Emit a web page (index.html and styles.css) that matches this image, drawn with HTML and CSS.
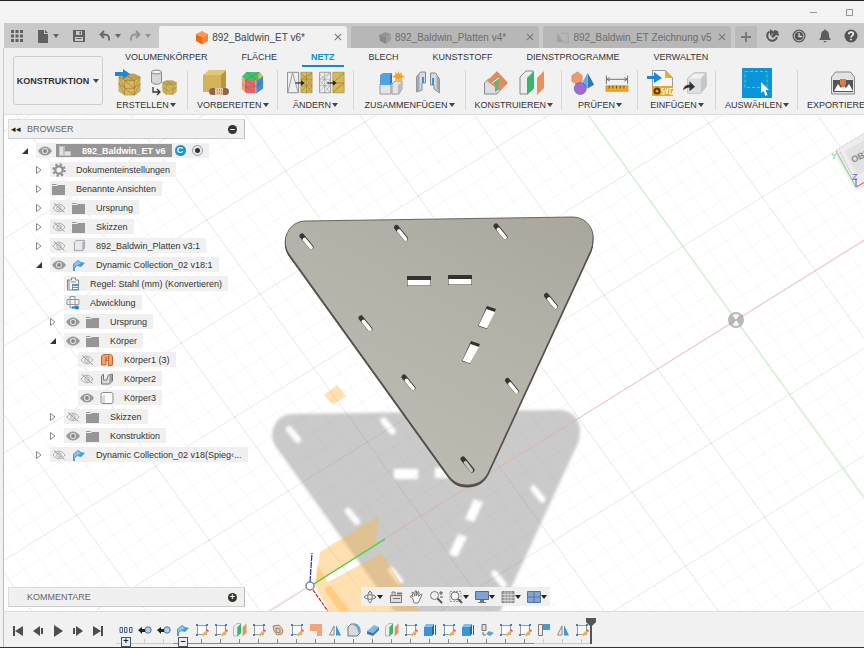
FILE: index.html
```html
<!DOCTYPE html>
<html lang="de">
<head>
<meta charset="utf-8">
<meta name="viewport" content="width=device-width, initial-scale=1">
<title>892_Baldwin_ET v6*</title>
<link rel="stylesheet" href="styles.css">
</head>
<body>
<svg class="sprite" aria-hidden="true">
  <symbol id="apps" viewBox="0 0 12 12"><path fill="#606060" d="M0 0h3v3H0zM4.500 0h3v3h-3zM9 0h3v3H9zM0 4.500h3v3H0zM4.500 4.500h3v3h-3zM9 4.500h3v3H9zM0 9h3v3H0zM4.500 9h3v3h-3zM9 9h3v3H9z"/></symbol>
  <symbol id="file" viewBox="0 0 12 14"><path fill="#606060" d="M1 1h6v4h4v9H1zM8 1l3 3H8z"/></symbol>
  <symbol id="save" viewBox="0 0 12 12"><path fill="#606060" fill-rule="evenodd" d="M0 0h12v12H1l-1-1zM3 1v4h6V1zM2 7v4h8V7zM6.500 1.500h1.500v3H6.500zM3.500 8h5v1h-5z"/></symbol>
  <symbol id="undo" viewBox="0 0 12 12"><path fill="none" stroke="#666" stroke-width="1.800" d="M5 1L1.500 4.500 5 8M2 4.500h4c3 0 4.500 2 4 6"/></symbol>
  <symbol id="cube" viewBox="0 0 12 14"><path fill="#ff9a52" d="M6 0l6 3-6 3-6-3z"/><path fill="#ef6a16" d="M0 3l6 3v7.500L0 10z"/><path fill="#fb8238" d="M12 3L6 6v7.500l6-3.500z"/></symbol>
  <symbol id="graycube" viewBox="0 0 12 14"><path fill="#949494" d="M6 1l6 2-5 3-7-2z"/><path fill="#888" d="M0 4l7 2v7l-6-3z"/><path fill="#9d9d9d" d="M12 3L7 6v7l5-4z"/></symbol>
  <symbol id="sheet" viewBox="0 0 14 12"><path fill="#a2a2a2" d="M0 0l8 11H0z"/><path fill="none" stroke="#a2a2a2" d="M5 .5h8v11H8"/></symbol>
  <symbol id="x" viewBox="0 0 8 8"><path fill="none" stroke="#777" stroke-width="1.100" d="M.8.8l6.400 6.400M7.200.8L.8 7.200"/></symbol>
  <symbol id="plus" viewBox="0 0 10 10"><path fill="none" stroke="#777" stroke-width="1.800" d="M5 0v10M0 5h10"/></symbol>
  <symbol id="ext" viewBox="0 0 14 14"><path fill="none" stroke="#555" stroke-width="2" d="M4.500 2.500A5 5 0 1 0 12 8"/><path fill="#555" d="M5 0l4 3-4 4zM9 1l4 1 1 5-3-1-3 3-2-2 2-2z"/></symbol>
  <symbol id="clock" viewBox="0 0 14 14"><circle cx="7" cy="7" r="6.500" fill="#555"/><circle cx="7" cy="7" r="4.800" fill="none" stroke="#c9c9c9"/><path fill="none" stroke="#ddd" stroke-width="1.300" d="M7 4v3.500h3"/></symbol>
  <symbol id="bell" viewBox="0 0 12 14"><path fill="#5c5c5c" d="M6 0l1 1.500c2.500.5 3 2.500 3 5 0 2 1 3 2 4.500H0c1-1.500 2-2.500 2-4.500 0-2.500.5-4.500 3-5zM4 12h4l-2 1.500z"/></symbol>
  <symbol id="help" viewBox="0 0 14 14"><circle cx="7" cy="7" r="6.500" fill="#555"/><path fill="none" stroke="#eee" stroke-width="1.700" d="M4.800 5.300c0-3 4.500-2.800 4.500-.2C9.300 6.800 7 6.500 7 8.500M7 9.700v1.600"/></symbol>

  <symbol id="mesh" viewBox="0 0 24 24"><path fill="#d9b95f" stroke="#a98c3c" stroke-width=".6" d="M1 4l6-3h10l6 3v15l-6 4H7l-6-4z"/><path fill="#c3a24b" d="M1 4l6-3h10l6 3-6 4H7z"/><path fill="none" stroke="#9a803b" stroke-width=".7" d="M1 4l6 4h10l6-4M7 8v15M17 8v15M1 11l6 5h10l6-5M7 8l10 8M7 16l10 7M1 4l6 12M23 4l-6 12M7 1l10 7M1 11l6 12M23 11l-6 12"/></symbol>
  <symbol id="meshin" viewBox="0 0 28 28"><use href="#mesh" x="3" y="4" width="23" height="23"/><path fill="#1c86d8" d="M0 3h8V0l7 5-7 5V7H0z"/></symbol>
  <symbol id="meshconv" viewBox="0 0 28 28"><path fill="#d5d7da" stroke="#888" d="M2.500 3v10c2 3 8 3 10 0V3"/><ellipse cx="7.500" cy="3" rx="5" ry="2" fill="#eee" stroke="#888"/><use href="#mesh" x="13" y="11" width="15" height="15"/><path fill="none" stroke="#333" stroke-width="1.300" d="M4 18v5h6M8 20l3 3-3 3"/></symbol>
  <symbol id="repair" viewBox="0 0 28 28"><path fill="#e3c874" d="M1 6l6-5h17l-5 5z"/><path fill="#d4b45a" d="M1 6h18v17H1z"/><path fill="#b9963e" d="M19 6l5-5v17l-5 5z"/><rect x="7" y="19" width="20" height="7" rx="3.500" fill="#8c6649"/><path fill="#e3c9a3" d="M13 19h8v7h-8z"/><path stroke="#8c6649" stroke-dasharray="1 1" d="M15 21h5M15 24h5"/></symbol>
  <symbol id="facegroup" viewBox="0 0 26 26"><path fill="#ed6467" d="M3 9h14v15H7l-4-4z"/><path fill="#3fc46b" d="M2 6l5-5h14l4 5-7 4H6z"/><path fill="#3d8dd8" d="M18 10l7-4v13l-7 5z"/><path fill="#f3a16b" d="M2 7l4 3v13l-4-4z"/><path fill="#e4bb46" d="M20 1l5 5-5 3z"/><path fill="none" stroke="#666" stroke-width=".5" d="M6 10v13M18 10v14M2 14l4 3h12l7-5M6 10l12 7M6 17l12 7M7 1l11 9M21 1L6 10M25 6l-7 11"/></symbol>
  <symbol id="remesh" viewBox="0 0 28 26"><path fill="#eee" stroke="#888" d="M.5 1.500h12v22H.5z"/><path fill="none" stroke="#999" d="M1 23L6 2l6 21"/><path fill="#d6b958" stroke="#a0863d" stroke-width=".7" d="M15 1.500h12v22H15z"/><path fill="none" stroke="#a0863d" stroke-width=".7" d="M15 9h12M15 16h12M21 2v22M15 9l12-7M15 16l12-14M15 23L27 9M21 23l6-7M15 2l12 14M15 9l12 14"/><path stroke="#222" stroke-width="1.300" fill="none" d="M9 13h8"/><path fill="#222" d="M15 10l4 3-4 3z"/></symbol>
  <symbol id="reduce" viewBox="0 0 28 26"><path fill="#eee" stroke="#999" d="M.5 1.500h12v22H.5z"/><path fill="none" stroke="#999" stroke-width=".6" d="M0 9h12M0 16h12M6 2v22M0 9l12-7M0 16L12 2M0 23L12 9M6 23l6-7M0 2l12 14M0 9l12 14"/><path fill="#d6b958" stroke="#b89a48" d="M15 1.500h12v22H15z"/><path fill="none" stroke="#a0863d" d="M15 13h12M15 13L27 2M15 23l12-10"/><path stroke="#222" stroke-width="1.300" d="M9 13h8"/><path fill="#222" d="M15 10l4 3-4 3z"/></symbol>
  <symbol id="newcomp" viewBox="0 0 26 26"><path fill="#e2e4e6" stroke="#999" d="M1 14h11v10H1zM13 14l3-3h7v8l-3 5h-7z"/><path fill="#b9bcc0" d="M19 15l4-3v8l-4 4z"/><path fill="#4fa2e4" d="M1 5l3-2h9v10l-2 2H1z"/><path fill="#2b79bd" d="M11 6l2-3v10l-2 2z"/><path fill="#f5a51b" d="M19.500 1l1.200 3L23 2l-.5 3 3.500 1.500L22.500 8l.5 3-2.300-2-1.200 3-1.200-3-2.300 2 .5-3L13 6.500 16.500 5 16 2l2.300 2z"/></symbol>
  <symbol id="joint" viewBox="0 0 26 26"><path fill="#d8dadd" stroke="#85888c" d="M1.500 22V7l4-5h5v11H7v7zM24.500 23V9l-4-6h-5v12H19v4z"/><path fill="#a5a8ac" d="M1.500 7l3-3v16l-3 2zM24.500 9l-3-3v13l3 4z"/><path stroke="#3a92da" stroke-width="2" d="M8 7v6M18 8v7"/></symbol>
  <symbol id="offset" viewBox="0 0 26 26"><path fill="#dcdee0" stroke="#85888c" d="M1.500 24V13l4-4H18v10l-4 5z"/><path fill="#e58b59" d="M4 11L14 1l11 12-8 8z"/><path fill="#57b97e" d="M7 12l9-4-1 12-3 2v-8z"/><path fill="none" stroke="#fff" d="M9 13l7-5"/></symbol>
  <symbol id="planes" viewBox="0 0 26 26"><path fill="#eceded" stroke="#85888c" d="M1 24V7l6-6h7v18l-6 5z"/><path fill="#36b56c" d="M8 8l7-7v17l-7 7z"/><path fill="#e5925f" d="M18 8l7-7v17l-7 7z"/></symbol>
  <symbol id="solids" viewBox="0 0 26 26"><path fill="#2f79ad" d="M18 2l7 13-7 4z"/><path fill="#62ade0" d="M18 2l-7 13 7 4z"/><path fill="#ef9a6b" stroke="#c36d3e" stroke-width=".6" d="M1 5l6-4 5 4v6l-5 4-6-4z"/><circle cx="10" cy="19" r="6.500" fill="#9c6dd6" stroke="#6841a5" stroke-width=".6"/></symbol>
  <symbol id="ruler" viewBox="0 0 26 26"><path fill="none" stroke="#666" d="M1.500 5v9M24.500 5v9M2 9h22M5 7L2 9l3 2M21 7l3 2-3 2"/><path fill="#f0a92a" stroke="#b97c16" stroke-width=".6" d="M1 16h24v6H1z"/><path stroke="#6a4b12" d="M4.500 16v3M8.500 16v3M12.500 16v3M16.500 16v3M20.500 16v3"/></symbol>
  <symbol id="svgin" viewBox="0 0 26 28"><path fill="#f6f6f6" stroke="#999" d="M5.500 1.500h13l7 7v17h-20z"/><path fill="#f2a92f" d="M18 1l8 8h-8z"/><path fill="#eba72a" d="M5 17h21v10H5z"/><circle cx="10" cy="22" r="2.500" fill="none" stroke="#553a06" stroke-width="2"/><path fill="none" stroke="#fff" stroke-width="1.100" d="M17 19.500h-2v2.500h2v3h-2.500M18.500 19l1.300 6 1.300-6M25.500 19.500H23V25h2.500v-3"/><path fill="#1b87d8" d="M0 7h7V3l8 6-8 5v-4H0z"/></symbol>
  <symbol id="derive" viewBox="0 0 26 26"><path fill="#f1f1f3" stroke="#aaa" d="M5 8l7-6h13v15l-6 7H5z"/><path fill="#c5c7cb" d="M19 8l6-6v15l-6 7z"/><path fill="#dedfe2" d="M5 8h14v16H5z"/><path fill="#333" d="M0 21c1-5 4-6 7-6v-4l6 6-6 5v-4c-3 0-4 1-7 3z"/></symbol>
  <symbol id="select" viewBox="0 0 30 30"><path fill="#0b94d7" d="M0 0h30v30H0z"/><path fill="none" stroke="#4fd69a" stroke-dasharray="3 2" d="M3 3.500h22v16H3z"/><path fill="#fff" d="M19 14v11l2.500-2 2 5 2-1-2-5H27z"/></symbol>
  <symbol id="print" viewBox="0 0 26 26"><path fill="#e1e2e3" stroke="#888" d="M1.500 24V7l4-5h15l4 5v17z"/><path fill="#555" d="M3 10h20v12H3z"/><path fill="#fff" d="M4 21l4-7 3 4 2-3 3 3 3-4 4 7z"/><path fill="#e17a3b" d="M10 9h6v5l-3 4-3-4z"/></symbol>

  <symbol id="eye" viewBox="0 0 14 10"><path fill="#999" d="M0 5c4-6 10-6 14 0-4 6-10 6-14 0z"/><circle cx="7" cy="5" r="2.900" fill="#e8e8e8"/><circle cx="7" cy="5" r="1.900" fill="#858585"/></symbol>
  <symbol id="eyeoff" viewBox="0 0 14 10"><path fill="none" stroke="#aaa" d="M1 5c3.500-5 8.500-5 12 0-3.500 5-8.500 5-12 0z"/><circle cx="7" cy="5" r="2.200" fill="none" stroke="#aaa"/><path stroke="#999" d="M2 .5l10.500 9"/></symbol>
  <symbol id="folder" viewBox="0 0 14 12"><path fill="#969696" d="M0 3h5l1-1h7v10H0zM0 1h5l-1 1H0z"/></symbol>
  <symbol id="gear" viewBox="0 0 14 14"><circle cx="7" cy="7" r="5.500" fill="none" stroke="#929292" stroke-width="2.600" stroke-dasharray="2.200 2.120"/><circle cx="7" cy="7" r="3.700" fill="none" stroke="#929292" stroke-width="2.200"/></symbol>
  <symbol id="comp" viewBox="0 0 14 12"><path fill="#e2e2e2" stroke="#c4c4c4" d="M1.500 1.500h4v9h-4zM6.500 6.500h6v4h-6z"/><path fill="#bbb" d="M5 1h2v5H5z"/></symbol>
  <symbol id="box" viewBox="0 0 14 14"><path fill="#e7e8ec" stroke="#9b9da3" d="M1.500 3.500l2-2h9v8l-2 3h-9z"/><path fill="#adb0ba" d="M10 4l2.500-2.500v8l-2.500 3z"/></symbol>
  <symbol id="flange" viewBox="0 0 14 12"><path fill="#4a9ad4" d="M1 5l5-4 3 2 4 1-4 4-4-1-2 2v3H1z"/><path fill="#8cc6ee" d="M2 5l4-3 3 2-3 2-3 1-1 3z"/></symbol>
  <symbol id="rule" viewBox="0 0 14 14"><path fill="#f7f7f7" stroke="#888" d="M1.500 3h4V1h4v2h3v10h-11zM3 3v9M5 5h5"/><path fill="#5f91bd" d="M6 7h7v6H6z"/><path stroke="#fff" d="M7 9.500h5M7 11.500h5"/></symbol>
  <symbol id="flat" viewBox="0 0 14 14"><path fill="none" stroke="#999" d="M4 .5h5v11H4zM1 3.500h12v5H1z"/><path stroke="#1684d2" stroke-width="2" d="M6 11.500h4"/><circle cx="11" cy="11.500" r="2" fill="#1684d2"/></symbol>
  <symbol id="orangebody" viewBox="0 0 14 14"><path fill="#f4a06c" stroke="#b86734" d="M1.500 3l2-1.500h7l2 1.500v9l-4 1V8L6 7v5H1.500zM6 4v4M8.500 3v5"/></symbol>
  <symbol id="ubody" viewBox="0 0 14 14"><path fill="#d7d9dc" stroke="#777" d="M1.500 4l2-2v6h3l2-5 4-1v7l-3 3h-8z"/><path fill="#9b9ea3" d="M10 3l2-1v7l-3 2z"/></symbol>
  <symbol id="whitebody" viewBox="0 0 14 14"><rect x="1" y="1.500" width="12" height="11" rx="2" fill="#fafafa" stroke="#8b8b8b"/><path fill="#d9d9dc" d="M2 5l3-1v8H2z"/></symbol>
  <symbol id="closed" viewBox="0 0 8 10"><path fill="#fff" stroke="#888" d="M1.500 1.500L6 5 1.500 8.500z"/></symbol>
  <symbol id="open" viewBox="0 0 8 8"><path fill="#333" d="M7 1v6H1z"/></symbol>

  <symbol id="first" viewBox="0 0 12 12"><path fill="#4d4d4d" d="M1 1h2v10H1zM11 1v10L3 6z"/></symbol>
  <symbol id="prev" viewBox="0 0 12 12"><path fill="#4d4d4d" d="M8 1v10L1 6zM9 3h2v6H9z"/></symbol>
  <symbol id="play" viewBox="0 0 12 12"><path fill="#4d4d4d" d="M2 0l9 6-9 6z"/></symbol>
  <symbol id="next" viewBox="0 0 12 12"><path fill="#4d4d4d" d="M4 1v10l7-5zM1 3h2v6H1z"/></symbol>
  <symbol id="last" viewBox="0 0 12 12"><path fill="#4d4d4d" d="M9 1h2v10H9zM1 1v10l8-5z"/></symbol>
  <symbol id="trio" viewBox="0 0 14 14"><path fill="#dbe8f7" stroke="#4c6288" d="M1 4.500h2.500v5H1zM5.500 4.500H8v5H5.500zM10.500 4.500H13v5h-2.500z"/></symbol>
  <symbol id="link" viewBox="0 0 14 14"><circle cx="10" cy="7" r="3.200" fill="#b3cdec" stroke="#566f95"/><path fill="#222" d="M0 7l4-3v2h3v3H4v2z"/></symbol>
  <symbol id="sketch" viewBox="0 0 14 14"><path fill="#fafafa" stroke="#999" d="M2.500 2.500h9v9h-9z"/><path fill="#3686c5" d="M1 1h2v2H1zM11 1h2v2h-2zM1 11h2v2H1z"/><path stroke="#f0b352" stroke-width="2.400" d="M7.500 12.500L12 8.500"/><path fill="#dd5148" d="M11 7l2 2 1-1-2-2z"/></symbol>
  <symbol id="turn" viewBox="0 0 14 14"><path fill="#f0c9a8" stroke="#bb8258" d="M2 3l6-1 4 5-1 4-5 1-3-4z"/><path fill="none" stroke="#888" d="M5 5l4 1v4L5 9z"/></symbol>
  <symbol id="orangeflange" viewBox="0 0 14 14"><path fill="#f3a577" d="M1 1h12v12H8V8H1z"/></symbol>
  <symbol id="mirror" viewBox="0 0 14 14"><path fill="#eee" stroke="#888" d="M6 3v9H1.500z"/><path fill="#3d96d3" d="M8 2v10.500h5z"/></symbol>
  <symbol id="fillet" viewBox="0 0 14 14"><path fill="#d8dadc" stroke="#777" d="M1 13V4l3-3h4q5 1 5 7v2l-3 3z"/><path fill="#5fa9dd" d="M6 2q5 1 5 8l2-2q0-6-5-7z"/></symbol>
  <symbol id="slab" viewBox="0 0 14 14"><path fill="#7cbaec" d="M1 8l7-6 5 2-6 6z"/><path fill="#4774a3" d="M1 8l6 2 6-6v3l-6 6-6-2z"/></symbol>
  <symbol id="extrude" viewBox="0 0 14 14"><path fill="#80c0ef" d="M1 4l2-3h8L9 4z"/><path fill="#3e93d2" d="M1 4h8v9H1z"/><path fill="#22699e" d="M9 4l2-3v10l-2 2z"/><path stroke="#555" d="M12.500 2v10"/></symbol>
  <symbol id="bend" viewBox="0 0 14 14"><path fill="#ddd" stroke="#777" d="M2 1.500h4v6H2zM3 9v3h3"/><path fill="#5aa4d9" d="M6 11l3-3 5 2-4 3z"/></symbol>
  <symbol id="unfold" viewBox="0 0 14 14"><path fill="#eee" stroke="#777" d="M1.500 1.500h4v11h-4z"/><path fill="#4999d4" d="M6 1h7v6H6z"/></symbol>

  <symbol id="orbit" viewBox="0 0 14 14"><path fill="none" stroke="#777" d="M7 1c3 3 3 9 0 12M7 1c-3 3-3 9 0 12M1 7c3-3 9-3 12 0M1 7c3 3 9 3 12 0M5 3l2-2 2 2M11 5l2 2-2 2"/></symbol>
  <symbol id="look" viewBox="0 0 14 14"><path fill="#ddd" stroke="#777" d="M1.500 5.500h11v7h-11zM3 5V2h3v3M4 8.500h7"/><path stroke="#777" stroke-width="2" d="M8 3.500h5"/></symbol>
  <symbol id="pan" viewBox="0 0 14 14"><path fill="#fafafa" stroke="#777" d="M4 9L1 6.500 2 5.500 4 7 3 2.500l1-.5L6 6V1h1.500v5L9 1.500l1 .5-.5 4.500L12 4l1 .5L10.500 10 9 13H5z"/></symbol>
  <symbol id="zoom" viewBox="0 0 14 14"><circle cx="5.500" cy="5.500" r="4" fill="#eef4f4" stroke="#777"/><path stroke="#555" stroke-width="2" d="M8.500 8.500L13 13"/><path stroke="#555" d="M10 3h4M12 1v4M11 7h3"/></symbol>
  <symbol id="fit" viewBox="0 0 14 14"><path fill="none" stroke="#999" stroke-dasharray="2 1" d="M1 1.500h11v10H1z"/><circle cx="6" cy="6" r="4" fill="#eef4f4" stroke="#777"/><path stroke="#555" stroke-width="2" d="M9 9l4 4"/></symbol>
  <symbol id="display" viewBox="0 0 14 14"><path fill="#7da4d4" stroke="#667" d="M.5 1.500h13v8H.5z"/><path fill="#777" d="M5 10h4v2h2v1H3v-1h2z"/></symbol>
  <symbol id="gridicon" viewBox="0 0 14 14"><path fill="#999" stroke="#888" d="M1 1.500h12v11H1z"/><path stroke="#ddd" stroke-width=".8" d="M4 1v12M7 1v12M10 1v12M1 4.500h12M1 7.500h12M1 10.500h12"/></symbol>
  <symbol id="views" viewBox="0 0 14 14"><path fill="#81a4d0" stroke="#55779f" d="M.5 1.500h13v11H.5zM7 2v10M1 7h12"/></symbol>
</svg>

<div class="app">
  <div class="titlebar">
    <button class="win" aria-label="Minimieren"><i class="win-min"></i></button>
    <button class="win" aria-label="Maximieren"><i class="win-max"></i></button>
  </div>

  <header class="docbar">
    <div class="quick">
      <button aria-label="Datenbereich"><svg width="12" height="12"><use href="#apps"/></svg></button>
      <button aria-label="Datei"><svg width="12" height="14"><use href="#file"/></svg><i class="caret"></i></button>
      <button aria-label="Speichern"><svg width="12" height="12"><use href="#save"/></svg></button>
      <span class="history">
        <button aria-label="Rückgängig"><svg width="12" height="12"><use href="#undo"/></svg><i class="caret"></i></button>
        <button class="faded" aria-label="Wiederholen"><svg class="flip" width="12" height="12"><use href="#undo"/></svg><i class="caret"></i></button>
      </span>
    </div>
    <div class="docs">
      <div class="doc active"><span class="doc-name"><svg width="12" height="14"><use href="#cube"/></svg>892_Baldwin_ET v6*</span><button aria-label="Schließen"><svg width="8" height="8"><use href="#x"/></svg></button></div>
      <div class="doc"><span class="doc-name"><svg width="12" height="14"><use href="#graycube"/></svg>892_Baldwin_Platten v4*</span><button aria-label="Schließen"><svg width="8" height="8"><use href="#x"/></svg></button></div>
      <div class="doc"><span class="doc-name"><svg width="12" height="12"><use href="#sheet"/></svg>892_Baldwin_ET Zeichnung v5</span><button aria-label="Schließen"><svg width="8" height="8"><use href="#x"/></svg></button></div>
      <button class="add" aria-label="Neu"><svg width="10" height="10"><use href="#plus"/></svg></button>
    </div>
    <div class="account">
      <button aria-label="Erweiterungen"><svg width="14" height="14"><use href="#ext"/></svg></button>
      <button aria-label="Auftragsstatus"><svg width="14" height="14"><use href="#clock"/></svg></button>
      <button aria-label="Benachrichtigungen"><svg width="12" height="14"><use href="#bell"/></svg></button>
      <button aria-label="Hilfe"><svg width="14" height="14"><use href="#help"/></svg></button>
    </div>
  </header>

  <section class="ribbon">
    <button class="workspace">KONSTRUKTION<i class="caret"></i></button>
    <div class="tools">
      <nav class="tabs">
        <a href="#">VOLUMENKÖRPER</a><a href="#">FLÄCHE</a><a href="#" class="current">NETZ</a><a href="#">BLECH</a><a href="#">KUNSTSTOFF</a><a href="#">DIENSTPROGRAMME</a><a href="#">VERWALTEN</a>
      </nav>
      <div class="groups">
        <button class="group roomy"><span class="icons"><svg width="28" height="28"><use href="#meshin"/></svg><svg width="28" height="28"><use href="#meshconv"/></svg></span><span>ERSTELLEN<i class="caret"></i></span></button>
        <button class="group"><span class="icons wide"><svg width="28" height="28"><use href="#repair"/></svg><svg width="24" height="24"><use href="#facegroup"/></svg></span><span>VORBEREITEN<i class="caret"></i></span></button>
        <button class="group"><span class="icons"><svg width="26" height="26"><use href="#remesh"/></svg><svg width="26" height="26"><use href="#reduce"/></svg></span><span>ÄNDERN<i class="caret"></i></span></button>
        <button class="group roomy"><span class="icons wide"><svg width="26" height="26"><use href="#newcomp"/></svg><svg width="26" height="26"><use href="#joint"/></svg></span><span>ZUSAMMENFÜGEN<i class="caret"></i></span></button>
        <button class="group"><span class="icons wide"><svg width="26" height="26"><use href="#offset"/></svg><svg width="26" height="26"><use href="#planes"/></svg></span><span>KONSTRUIEREN<i class="caret"></i></span></button>
        <button class="group"><span class="icons wide"><svg width="24" height="26"><use href="#solids"/></svg><svg width="24" height="26"><use href="#ruler"/></svg></span><span>PRÜFEN<i class="caret"></i></span></button>
        <button class="group"><span class="icons wide"><svg width="26" height="28"><use href="#svgin"/></svg><svg width="24" height="26"><use href="#derive"/></svg></span><span>EINFÜGEN<i class="caret"></i></span></button>
        <button class="group"><span class="icons"><svg width="30" height="30"><use href="#select"/></svg></span><span>AUSWÄHLEN<i class="caret"></i></span></button>
        <button class="group"><span class="icons"><svg width="26" height="26"><use href="#print"/></svg></span><span>EXPORTIEREN<i class="caret"></i></span></button>
      </div>
    </div>
  </section>

  <main class="viewport">
    <svg class="scene" viewBox="4 115 860 496" preserveAspectRatio="xMidYMid slice" aria-hidden="true">
      <defs>
        <pattern id="cells" width="20" height="20" patternUnits="userSpaceOnUse" patternTransform="matrix(.79 -.49 .535 .74 736 320)"><path fill="none" stroke="#777" stroke-opacity=".06" d="M0 .5h20M.5 0v20"/></pattern>
        <pattern id="major" width="100" height="100" patternUnits="userSpaceOnUse" patternTransform="matrix(.79 -.49 .535 .74 736 320)"><path fill="none" stroke="#777" stroke-opacity=".17" stroke-dasharray="2 1" d="M0 .5h100M.5 0v100"/></pattern>
        <linearGradient id="metal" x1="1" y1="0" x2=".4" y2="1"><stop stop-color="#a9a79c"/><stop offset=".45" stop-color="#b4b1a9"/><stop offset="1" stop-color="#bebbb2"/></linearGradient>
        <filter id="soft" x="-5%" y="-5%" width="110%" height="110%"><feGaussianBlur stdDeviation="1.500"/></filter>
        <path id="plate" d="M306 221L572 217C586 217 594 228 593 239Q593 245 591 250L488 473C483 483 474 485 467 485C459 485 453 482 448 475L289 254C280 241 288 221 306 221z"/>
        <path id="slots" stroke-linecap="round" d="M302 236l9 11M396.500 227.500l9 11M496 226l9 11M546.500 295.500l9 11M361 318l9 11M404 377l9 11M507.500 380.500l9 11M463 459l9 11"/>
        <path id="windows" d="M407 276h24v10h-24zM448 275h24v10h-24zM487 306l9 3-9 20-9-3zM471 341l9 3-10 20-8-3z"/>
      </defs>
      <path fill="#fff" d="M0 0h900v700H0z"/>
      <g transform="translate(-13 193)" filter="url(#soft)">
        <use href="#plate" fill="#cacaca"/>
        <use href="#slots" stroke="#fff" stroke-width="6"/>
        <use href="#windows" fill="#fff"/>
      </g>
      <path fill="url(#cells)" d="M0 0h900v700H0z"/>
      <path fill="url(#major)" d="M0 0h900v700H0z"/>
      <g fill="#ffb643" fill-opacity=".42">
        <path d="M324 395l13-10 9 11-13 9zM320 552l58-36-2 27-60 40z"/>
        <path d="M328 582l54-29 39 62h-89l-17-29 2-21z"/>
        <path d="M324 589l6-4 21 28h-11z"/>
      </g>
      <path stroke="#f0b4b4" stroke-width=".8" d="M250 623.500L864 240"/>
      <path stroke="#b4f0b4" stroke-width=".8" d="M588 115l360 500"/>
      <path stroke="#37d637" stroke-width="1.200" d="M314 584l71-45"/>
      <path stroke="#2929c4" stroke-width="1.200" stroke-dasharray="6 1" d="M310 582l2-29"/>
      <path stroke="#cc2020" stroke-width="1.200" stroke-dasharray="4 1" d="M313 590l17 24"/>
      <circle cx="310" cy="586" r="4" fill="#fff" stroke="#858585" stroke-width="1.500"/>
      <use href="#plate" y="2" fill="#55544b" stroke="#3f3e38" stroke-width=".8"/>
      <use href="#plate" fill="url(#metal)" stroke="#4b4a44" stroke-width=".8"/>
      <use href="#slots" stroke="#37362f" stroke-width="5"/>
      <path stroke="#fff" stroke-width="3.600" stroke-linecap="round" d="M304.500 239.500l6.500 8M399 231l6.500 8M498.500 229.500l6.500 8M549 299l6.500 8M363.500 321.500l6.500 8M406.500 380.500l6.500 8M510 384l6.500 8"/>
      <path stroke="#c6c6c3" stroke-width="3.400" stroke-linecap="round" d="M465.500 462.500l6 8"/>
      <use href="#windows" fill="#33322d"/>
      <path fill="#fff" d="M407.500 280h23v5.500h-23zM448.500 279h23v5.500h-23zM486.500 309l8.500 3-8 16.500-8.500-3zM470.500 344l8.500 3-9 16.500-7.500-3z"/>
      <circle cx="736" cy="320" r="8" fill="#b9b9b9"/>
      <path fill="#fff" d="M736 320l-3.500-5q3.500-2 7 0zM736 320l-3.500 5q3.500 2 7 0z"/>
      <path stroke="#b99" stroke-width=".8" d="M729 324.400l14-8.800"/>
      <path fill="#ccc" fill-opacity=".6" filter="url(#soft)" d="M836 155l20 35 20-8V150z"/>
      <path fill="#ededee" stroke="#bbb" stroke-width=".7" stroke-dasharray="2 1" d="M836 150l34-20v50l-14 7z"/>
      <path fill="#e2e2e4" d="M845 151l25-14v32l-13 6z"/>
      <path fill="none" stroke="#c5c5c8" stroke-dasharray="2 1" d="M840 152l14 27"/>
      <path stroke="#7fdc7f" d="M836 151l20 36"/>
      <path stroke="#d66" d="M856 187l14-8"/>
      <path stroke="#5a5ae0" d="M856 187v-9"/>
      <text class="cube-face" transform="translate(853 163) rotate(-25)">OBEN</text>
      <text class="axis-z" x="852" y="180">Z</text>
      <text class="axis-y" x="831" y="159">Y</text>
    </svg>

    <aside class="panels">
      <div class="browser">
        <div class="panel-head"><span class="rewind">◂◂</span><h2>BROWSER</h2><button class="dot" aria-label="Einklappen">–</button></div>
        <ul class="tree">
          <li class="l0"><button class="tog" aria-label="Zuklappen"><svg width="8" height="8"><use href="#open"/></svg></button><div class="chip"><button class="slot" aria-label="Sichtbarkeit"><svg width="14" height="10"><use href="#eye"/></svg></button><span class="picked"><span class="slot"><svg width="14" height="12"><use href="#comp"/></svg></span><span class="name">892_Baldwin_ET v6</span></span><span class="cloud">C</span><input type="radio" name="active" aria-label="Komponente aktivieren" checked></div></li>
          <li class="l1"><button class="tog" aria-label="Aufklappen"><svg width="8" height="10"><use href="#closed"/></svg></button><div class="chip"><span class="slot"><svg width="14" height="14"><use href="#gear"/></svg></span><span class="name">Dokumenteinstellungen</span></div></li>
          <li class="l1"><button class="tog" aria-label="Aufklappen"><svg width="8" height="10"><use href="#closed"/></svg></button><div class="chip"><span class="slot"><svg width="14" height="12"><use href="#folder"/></svg></span><span class="name">Benannte Ansichten</span></div></li>
          <li class="l1"><button class="tog" aria-label="Aufklappen"><svg width="8" height="10"><use href="#closed"/></svg></button><div class="chip"><button class="slot" aria-label="Sichtbarkeit"><svg width="14" height="10"><use href="#eyeoff"/></svg></button><span class="slot"><svg width="14" height="12"><use href="#folder"/></svg></span><span class="name">Ursprung</span></div></li>
          <li class="l1"><button class="tog" aria-label="Aufklappen"><svg width="8" height="10"><use href="#closed"/></svg></button><div class="chip"><button class="slot" aria-label="Sichtbarkeit"><svg width="14" height="10"><use href="#eyeoff"/></svg></button><span class="slot"><svg width="14" height="12"><use href="#folder"/></svg></span><span class="name">Skizzen</span></div></li>
          <li class="l1"><button class="tog" aria-label="Aufklappen"><svg width="8" height="10"><use href="#closed"/></svg></button><div class="chip"><button class="slot" aria-label="Sichtbarkeit"><svg width="14" height="10"><use href="#eyeoff"/></svg></button><span class="slot"><svg width="13" height="13"><use href="#box"/></svg></span><span class="name">892_Baldwin_Platten v3:1</span></div></li>
          <li class="l1"><button class="tog" aria-label="Zuklappen"><svg width="8" height="8"><use href="#open"/></svg></button><div class="chip"><button class="slot" aria-label="Sichtbarkeit"><svg width="14" height="10"><use href="#eye"/></svg></button><span class="slot"><svg width="14" height="12"><use href="#flange"/></svg></span><span class="name">Dynamic Collection_02 v18:1</span></div></li>
          <li class="l2"><span class="tog"></span><div class="chip"><span class="slot"><svg width="14" height="14"><use href="#rule"/></svg></span><span class="name">Regel: Stahl (mm) (Konvertieren)</span></div></li>
          <li class="l2"><span class="tog"></span><div class="chip"><span class="slot"><svg width="14" height="14"><use href="#flat"/></svg></span><span class="name">Abwicklung</span></div></li>
          <li class="l2"><button class="tog" aria-label="Aufklappen"><svg width="8" height="10"><use href="#closed"/></svg></button><div class="chip"><button class="slot" aria-label="Sichtbarkeit"><svg width="14" height="10"><use href="#eye"/></svg></button><span class="slot"><svg width="14" height="12"><use href="#folder"/></svg></span><span class="name">Ursprung</span></div></li>
          <li class="l2"><button class="tog" aria-label="Zuklappen"><svg width="8" height="8"><use href="#open"/></svg></button><div class="chip"><button class="slot" aria-label="Sichtbarkeit"><svg width="14" height="10"><use href="#eye"/></svg></button><span class="slot"><svg width="14" height="12"><use href="#folder"/></svg></span><span class="name">Körper</span></div></li>
          <li class="l3"><span class="tog"></span><div class="chip"><button class="slot" aria-label="Sichtbarkeit"><svg width="14" height="10"><use href="#eyeoff"/></svg></button><span class="slot"><svg width="14" height="14"><use href="#orangebody"/></svg></span><span class="name">Körper1 (3)</span></div></li>
          <li class="l3"><span class="tog"></span><div class="chip"><button class="slot" aria-label="Sichtbarkeit"><svg width="14" height="10"><use href="#eyeoff"/></svg></button><span class="slot"><svg width="14" height="14"><use href="#ubody"/></svg></span><span class="name">Körper2</span></div></li>
          <li class="l3"><span class="tog"></span><div class="chip"><button class="slot" aria-label="Sichtbarkeit"><svg width="14" height="10"><use href="#eye"/></svg></button><span class="slot"><svg width="14" height="14"><use href="#whitebody"/></svg></span><span class="name">Körper3</span></div></li>
          <li class="l2"><button class="tog" aria-label="Aufklappen"><svg width="8" height="10"><use href="#closed"/></svg></button><div class="chip"><button class="slot" aria-label="Sichtbarkeit"><svg width="14" height="10"><use href="#eyeoff"/></svg></button><span class="slot"><svg width="14" height="12"><use href="#folder"/></svg></span><span class="name">Skizzen</span></div></li>
          <li class="l2"><button class="tog" aria-label="Aufklappen"><svg width="8" height="10"><use href="#closed"/></svg></button><div class="chip"><button class="slot" aria-label="Sichtbarkeit"><svg width="14" height="10"><use href="#eye"/></svg></button><span class="slot"><svg width="14" height="12"><use href="#folder"/></svg></span><span class="name">Konstruktion</span></div></li>
          <li class="l1"><button class="tog" aria-label="Aufklappen"><svg width="8" height="10"><use href="#closed"/></svg></button><div class="chip"><button class="slot" aria-label="Sichtbarkeit"><svg width="14" height="10"><use href="#eyeoff"/></svg></button><span class="slot"><svg width="14" height="12"><use href="#flange"/></svg></span><span class="name">Dynamic Collection_02 v18(Spieg‹...</span></div></li>
        </ul>
      </div>
      <div class="panel-head comments"><h2>KOMMENTARE</h2><button class="dot" aria-label="Kommentar hinzufügen">+</button></div>
    </aside>

    <div class="navbar">
      <button aria-label="Orbit"><svg width="14" height="14"><use href="#orbit"/></svg><i class="caret"></i></button>
      <button aria-label="Ansicht"><svg width="14" height="14"><use href="#look"/></svg></button>
      <button aria-label="Pan"><svg width="14" height="14"><use href="#pan"/></svg></button>
      <button aria-label="Zoom"><svg width="14" height="14"><use href="#zoom"/></svg></button>
      <button aria-label="Einpassen"><svg width="14" height="14"><use href="#fit"/></svg><i class="caret"></i></button>
      <button aria-label="Anzeige"><svg width="14" height="14"><use href="#display"/></svg><i class="caret"></i></button>
      <button aria-label="Raster"><svg width="14" height="14"><use href="#gridicon"/></svg><i class="caret"></i></button>
      <button aria-label="Ansichtsfenster"><svg width="14" height="14"><use href="#views"/></svg><i class="caret"></i></button>
    </div>
  </main>

  <footer class="timeline">
    <div class="transport">
      <button aria-label="Anfang"><svg width="12" height="12"><use href="#first"/></svg></button>
      <button aria-label="Zurück"><svg width="12" height="12"><use href="#prev"/></svg></button>
      <button aria-label="Wiedergabe"><svg width="12" height="12"><use href="#play"/></svg></button>
      <button aria-label="Vor"><svg width="12" height="12"><use href="#next"/></svg></button>
      <button aria-label="Ende"><svg width="12" height="12"><use href="#last"/></svg></button>
    </div>
    <ol class="steps">
      <li class="light fold" data-sign="+"><svg width="14" height="14"><use href="#trio"/></svg></li>
      <li class="light"><svg width="14" height="14"><use href="#link"/></svg></li>
      <li class="light"><svg width="14" height="14"><use href="#link"/></svg></li>
      <li class="fold" data-sign="–"><svg width="14" height="14"><use href="#flange"/></svg></li>
      <li><svg width="14" height="14"><use href="#sketch"/></svg></li>
      <li><svg width="14" height="14"><use href="#sketch"/></svg></li>
      <li><svg width="14" height="14"><use href="#planes"/></svg></li>
      <li><svg width="14" height="14"><use href="#sketch"/></svg></li>
      <li><svg width="14" height="14"><use href="#turn"/></svg></li>
      <li><svg width="14" height="14"><use href="#sketch"/></svg></li>
      <li><svg width="14" height="14"><use href="#orangeflange"/></svg></li>
      <li><svg width="14" height="14"><use href="#mirror"/></svg></li>
      <li><svg width="14" height="14"><use href="#fillet"/></svg></li>
      <li><svg width="14" height="14"><use href="#slab"/></svg></li>
      <li><svg width="14" height="14"><use href="#planes"/></svg></li>
      <li><svg width="14" height="14"><use href="#sketch"/></svg></li>
      <li><svg width="14" height="14"><use href="#extrude"/></svg></li>
      <li><svg width="14" height="14"><use href="#sketch"/></svg></li>
      <li><svg width="14" height="14"><use href="#extrude"/></svg></li>
      <li><svg width="14" height="14"><use href="#bend"/></svg></li>
      <li><svg width="14" height="14"><use href="#sketch"/></svg></li>
      <li><svg width="14" height="14"><use href="#sketch"/></svg></li>
      <li class="light"><svg width="14" height="14"><use href="#unfold"/></svg></li>
      <li class="light"><svg width="14" height="14"><use href="#mirror"/></svg></li>
      <li class="light now"><svg width="14" height="14"><use href="#sketch"/></svg><svg class="marker" width="10" height="26" viewBox="0 0 10 26"><path fill="#555" d="M0 0h10v4L6 8v18H4V8L0 4z"/></svg></li>
    </ol>
  </footer>
</div>
</body>
</html>
```
FILE: styles.css
```css
* { box-sizing: border-box; }

body {
  margin: 0;
  font: 9px/12px "Liberation Sans", Arial, sans-serif;
  color: #333;
  background: #f1f1f1;
}

button {
  display: flex;
  align-items: center;
  justify-content: center;
  padding: 0;
  border: 0;
  background: none;
  color: inherit;
  font: inherit;
}

svg { display: block; flex: none; }
.sprite { position: absolute; width: 0; height: 0; }
ul, ol { margin: 0; padding: 0; list-style: none; }
h2 { margin: 0; font: inherit; }

.caret {
  display: inline-block;
  flex: none;
  border: solid transparent;
  border-width: 4px 3px 0;
  border-top-color: #444;
}

.app {
  display: flex;
  flex-direction: column;
  height: 100vh;
  min-height: 480px;
  overflow: hidden;
  border-top: 1px solid #222;
  border-bottom: 1px solid #333;
}

/* Window chrome */
.titlebar {
  display: flex;
  flex: none;
  justify-content: flex-end;
  gap: 16px;
  height: 22px;
  padding-right: 5px;
  background: #f3f3f3;
}
.win { width: 20px; }
.win-min { width: 7px; height: 1px; background: #999; }
.win-max { width: 7px; height: 7px; border: 1px solid #999; }

/* Document bar */
.docbar {
  display: flex;
  flex: none;
  height: 25px;
  margin-left: 4px;
  background: #c9c9c9;
}
.quick {
  display: flex;
  align-items: center;
  gap: 14px;
  width: 155px;
  padding-left: 7px;
}
.quick button { gap: 4px; }
.history { display: flex; gap: 8px; }
.quick .caret { border-top-color: #666; }
.faded { opacity: .55; }
.flip { transform: scaleX(-1); }
.docs {
  display: flex;
  flex: 0 1 598px;
  min-width: 0;
  gap: 4px;
  padding-top: 3px;
}
.doc {
  display: flex;
  flex: 0 1 188px;
  align-items: center;
  min-width: 0;
  padding-right: 5px;
  border-radius: 3px 3px 0 0;
  background: #b7b7b7;
  color: #6c6c6c;
  font-size: 10px;
}
.doc.active { background: #f1f1f1; color: #444; }
.doc-name {
  display: flex;
  flex: 1;
  align-items: center;
  justify-content: center;
  gap: 4px;
  padding: 2px 0 0 8px;
  white-space: nowrap;
}
.add { width: 22px; border-radius: 3px 3px 0 0; background: #bababa; }
.account {
  display: flex;
  align-items: center;
  gap: 13px;
  padding-left: 8px;
}

/* Ribbon */
.ribbon {
  display: flex;
  flex: none;
  height: 67px;
  margin-left: 3px;
  border-left: 1px solid #ccc;
  border-bottom: 1px solid #ddd;
  background: #f1f1f1;
}
.workspace {
  flex: none;
  gap: 4px;
  width: 90px;
  height: 49px;
  margin: 8px 1px 0 9px;
  border: 1px solid #ccc;
  border-radius: 3px;
  font-weight: bold;
}
.tools { min-width: 0; }
.tabs {
  display: flex;
  gap: 16px;
  padding-left: 12px;
}
.tabs a {
  height: 19px;
  padding: 3px 9px 0;
  border-bottom: 2px solid transparent;
  color: #333;
  text-decoration: none;
}
.tabs .current {
  border-color: #0b8fd0;
  color: #0b8fd0;
  font-weight: bold;
}
.groups { display: flex; }
.group {
  position: relative;
  flex: none;
  flex-direction: column;
  justify-content: flex-start;
  padding: 0 9px;
  white-space: nowrap;
}
.group.roomy { padding: 0 11px; }
.group:not(:last-child)::after {
  content: "";
  position: absolute;
  top: 3px;
  right: 0;
  width: 1px;
  height: 40px;
  background: #d7d7d7;
}
.group .caret { margin-left: 1px; vertical-align: 1px; }
.icons {
  display: flex;
  align-items: center;
  gap: 6px;
  height: 32px;
}
.icons.wide { gap: 10px; }

/* Canvas */
.viewport {
  position: relative;
  flex: 1;
  min-height: 0;
  margin-left: 3px;
  border-left: 1px solid #bbb;
  overflow: hidden;
}
.scene {
  position: absolute;
  inset: 0;
  width: 100%;
  height: 100%;
}
.cube-face { fill: #8c8c8c; font-size: 9px; font-weight: bold; }
.axis-z { fill: #6464dc; font-size: 9px; }
.axis-y { fill: #6fda6f; font-size: 9px; }

.panels {
  position: relative;
  display: flex;
  flex-direction: column;
  justify-content: space-between;
  width: 245px;
  height: 100%;
  padding: 4px 4px 4px;
}
.panel-head {
  display: flex;
  align-items: center;
  height: 20px;
  padding-right: 7px;
  border: 1px solid #ddd;
  border-right-color: #bbb;
  border-bottom-color: #ccc;
  background: #f0f0f0;
  color: #666;
}
.panel-head h2 { flex: 1; }
.rewind { width: 18px; padding-left: 2px; color: #222; }
.comments { padding-left: 18px; }
.dot {
  width: 9px;
  height: 9px;
  border-radius: 50%;
  background: #333;
  color: #fff;
  font-weight: bold;
  line-height: 9px;
}

.tree { margin: 2px 0 0 -4px; }
.tree li { display: flex; align-items: center; height: 19px; }
.l0 { padding-left: 10px; }
.l1 { padding-left: 24px; }
.l2 { padding-left: 38px; }
.l3 { padding-left: 52px; }
.tog { flex: none; width: 22px; }
.chip {
  display: flex;
  align-items: center;
  gap: 2px;
  height: 15px;
  padding-right: 6px;
  background: #f0f0f0;
  white-space: nowrap;
}
.slot {
  display: flex;
  flex: none;
  justify-content: center;
  width: 18px;
}
.name { padding-left: 6px; }
.picked {
  display: flex;
  align-items: center;
  gap: 2px;
  height: 13px;
  padding-right: 6px;
  background: #969696;
  color: #fff;
  font-weight: bold;
}
.cloud {
  width: 11px;
  height: 11px;
  margin-left: 1px;
  border-radius: 50%;
  background: #1595d3;
  color: #fff;
  font-weight: bold;
  line-height: 11px;
  text-align: center;
}
.chip input {
  appearance: none;
  width: 11px;
  height: 11px;
  margin: 0 0 0 4px;
  border: 1px solid #999;
  border-radius: 50%;
  background: radial-gradient(circle, #333 2px, #e6e9f2 3px);
}

.navbar {
  position: absolute;
  bottom: 5px;
  left: 357px;
  display: flex;
  align-items: center;
  gap: 6px;
  height: 19px;
  padding: 0 3px 0 2px;
  background: #f0f0f0;
}
.navbar .caret { border-top-color: #222; }

/* Timeline */
.timeline {
  display: flex;
  flex: none;
  height: 36px;
  margin-left: 3px;
  padding-left: 8px;
  border-left: 1px solid #bbb;
  border-top: 1px solid #ddd;
  background: #f1f1f1;
}
.transport {
  display: flex;
  gap: 8px;
  width: 104px;
  height: 38px;
}
.steps { display: flex; }
.steps li {
  position: relative;
  display: flex;
  justify-content: center;
  width: 19px;
  height: 32px;
  padding-top: 11px;
  border-bottom: 1px solid #888;
}
.steps li::after {
  content: "";
  position: absolute;
  bottom: 0;
  left: 9px;
  width: 1px;
  height: 4px;
  background: #888;
}
.steps .light { border-color: #ccc; }
.steps .light::after { background: #ccc; }
.steps .fold::after {
  content: attr(data-sign);
  bottom: -4px;
  left: 5px;
  width: 8px;
  height: 8px;
  border: 1px solid #555;
  background: #e8edf4;
  color: #222;
  font-weight: bold;
  line-height: 6px;
  text-align: center;
}
.marker { position: absolute; top: 6px; right: -5px; }
```
